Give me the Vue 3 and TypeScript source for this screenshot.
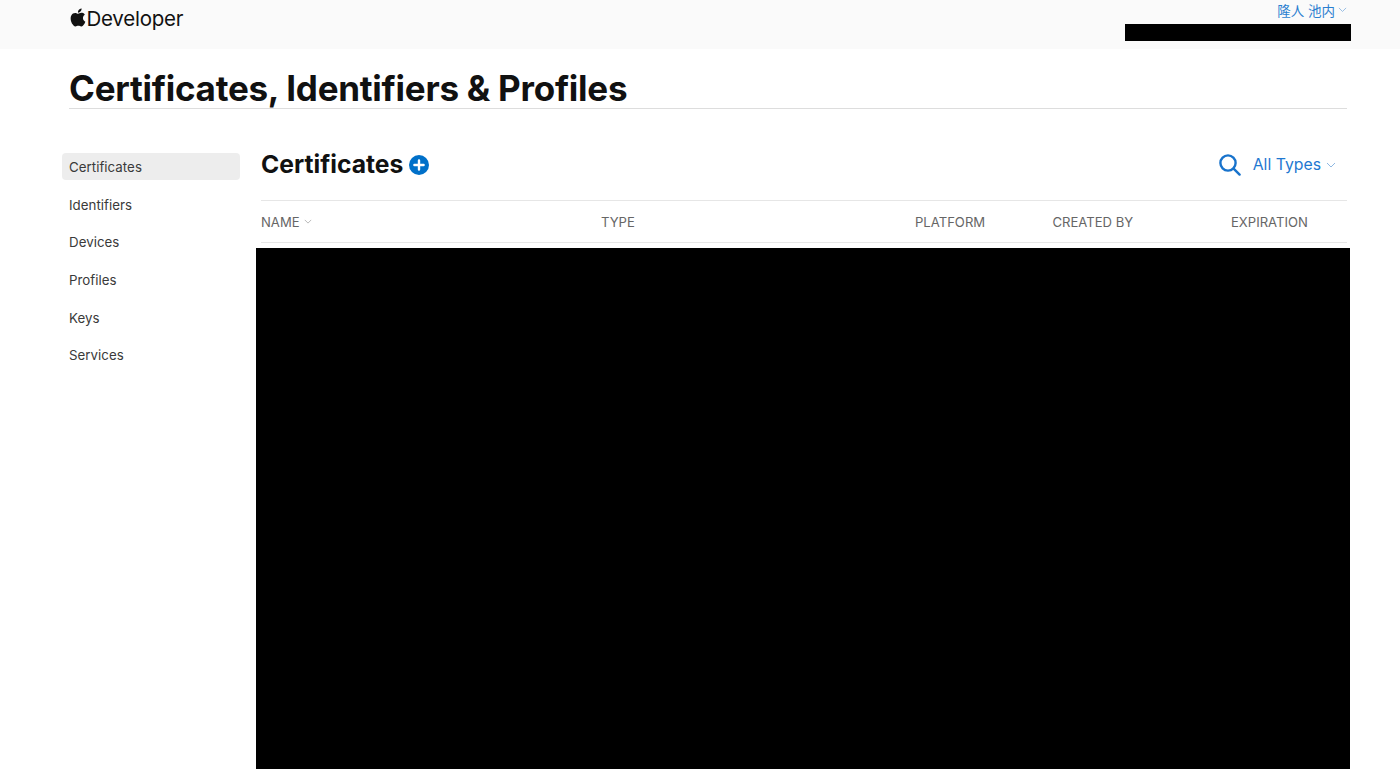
<script setup lang="ts">
interface Column {
  label: string
  sorted?: boolean
}

const navItems = ['Certificates', 'Identifiers', 'Devices', 'Profiles', 'Keys', 'Services']
const columns: Column[] = [
  { label: 'NAME', sorted: true },
  { label: 'TYPE' },
  { label: 'PLATFORM' },
  { label: 'CREATED BY' },
  { label: 'EXPIRATION' }
]
</script>

<template>
  <div class="page">
    <header class="topbar">
      <a class="brand">
        <svg class="apple" viewBox="0 0 24 24" aria-hidden="true">
          <path d="M12.152 6.896c-.948 0-2.415-1.078-3.96-1.04-2.04.027-3.91 1.183-4.961 3.014-2.117 3.675-.546 9.103 1.519 12.09 1.013 1.454 2.208 3.09 3.792 3.039 1.52-.065 2.09-.987 3.935-.987 1.831 0 2.35.987 3.96.948 1.637-.026 2.676-1.48 3.676-2.948 1.156-1.688 1.636-3.325 1.662-3.415-.039-.013-3.182-1.221-3.22-4.857-.026-3.04 2.48-4.494 2.597-4.559-1.429-2.09-3.623-2.324-4.39-2.376-2-.156-3.675 1.09-4.61 1.09zM15.53 3.83c.843-1.012 1.4-2.427 1.245-3.83-1.207.052-2.662.805-3.532 1.818-.78.896-1.454 2.338-1.273 3.714 1.338.104 2.715-.688 3.559-1.701" />
        </svg>
        <span>Developer</span>
      </a>
      <div class="account">
        <a class="account-name">
          隆人 池内
          <svg class="chevron small" viewBox="0 0 10 6" aria-hidden="true"><path d="M1 1l4 4 4-4" /></svg>
        </a>
        <div class="account-team"></div>
      </div>
    </header>

    <div class="title-wrap">
      <h1>Certificates, Identifiers &amp; Profiles</h1>
    </div>

    <div class="body">
      <nav class="sidebar">
        <a v-for="(item, i) in navItems" :key="item" class="nav-item" :class="{ active: i === 0 }">{{ item }}</a>
      </nav>

      <main class="content">
        <div class="toolbar">
          <div class="heading">
            <h2>Certificates</h2>
            <svg class="add" viewBox="0 0 20 20" aria-hidden="true">
              <circle cx="10" cy="10" r="10" fill="#0070c9" />
              <path d="M10 5.4v9.2M5.4 10h9.2" stroke="#fff" stroke-width="2.4" stroke-linecap="round" />
            </svg>
          </div>
          <div class="filters">
            <svg class="search" viewBox="0 0 22 22" aria-hidden="true">
              <circle cx="9" cy="9" r="7.6" />
              <path d="M14.6 14.6l6 6" />
            </svg>
            <a class="types">
              All Types
              <svg class="chevron" viewBox="0 0 10 6" aria-hidden="true"><path d="M1 1l4 4 4-4" /></svg>
            </a>
          </div>
        </div>

        <div class="table-head">
          <span v-for="col in columns" :key="col.label" class="col">
            {{ col.label }}
            <svg v-if="col.sorted" class="chevron grey" viewBox="0 0 10 6" aria-hidden="true"><path d="M1 1l4 4 4-4" /></svg>
          </span>
        </div>

        <div class="table-body"></div>
      </main>
    </div>
  </div>
</template>

<style>
html,
body {
  margin: 0;
  background: #fff;
}
</style>

<style scoped>
.page {
  height: 784px;
  overflow: hidden;
  font-family: Inter, "Noto Sans CJK JP", sans-serif;
  color: #111;
}

.topbar {
  display: flex;
  justify-content: space-between;
  height: 49px;
  padding: 0 49px 0 68.5px;
  box-sizing: border-box;
  background: #fafafa;
}

.brand {
  display: flex;
  align-items: center;
  gap: 0;
  height: 36px;
  color: #111;
  font-size: 20.5px;
  font-weight: 400;
  letter-spacing: -0.25px;
}

.apple {
  width: 18px;
  height: 19px;
  margin-top: -2px;
  fill: #111;
}

.account {
  display: flex;
  flex-direction: column;
  align-items: flex-end;
  width: 226px;
}

.account-name {
  display: flex;
  align-items: center;
  gap: 3px;
  height: 20px;
  padding-right: 4px;
  color: #2a7fd0;
  font-size: 13.5px;
}

.account-team {
  width: 226px;
  height: 17.5px;
  margin-top: 3.5px;
  background: #000;
}

.chevron {
  width: 10px;
  height: 6px;
  fill: none;
  stroke: #8fb8e2;
  stroke-width: 1;
}

.chevron.small {
  width: 9px;
  height: 5.4px;
}

.chevron.grey {
  width: 8px;
  height: 5px;
  stroke: #aaa;
}

.title-wrap {
  margin: 0 53px 0 69px;
  height: 59px;
  border-bottom: 1px solid #ddd;
}

h1 {
  margin: 0;
  padding-top: 17.5px;
  font-size: 35px;
  line-height: 42px;
  font-weight: 700;
  letter-spacing: -0.25px;
  white-space: nowrap;
}

.body {
  display: flex;
  margin-top: 44px;
  padding-left: 62px;
  padding-right: 53px;
}

.sidebar {
  display: flex;
  flex-direction: column;
  gap: 10.7px;
  width: 178px;
  flex: none;
}

.nav-item {
  height: 27px;
  padding-left: 7px;
  padding-top: 1px;
  box-sizing: border-box;
  line-height: 27px;
  border-radius: 4px;
  color: #3a3a3a;
  font-size: 13.3px;
  letter-spacing: 0.03px;
}

.nav-item.active {
  background: #ededed;
}

.content {
  flex: 1;
  min-width: 0;
  margin-left: 21px;
}

.toolbar {
  display: flex;
  justify-content: space-between;
  align-items: center;
  height: 23px;
  padding-bottom: 24px;
}

.heading {
  display: flex;
  align-items: center;
  gap: 6px;
}

h2 {
  margin: 0 0 1px;
  font-size: 24.7px;
  line-height: 24px;
  font-weight: 700;
}

.add {
  width: 20px;
  height: 20px;
}

.filters {
  display: flex;
  align-items: center;
  gap: 12px;
  padding-right: 11px;
  color: #1f78d1;
}

.search {
  width: 22px;
  height: 22px;
  fill: none;
  stroke: #1873cc;
  stroke-width: 2.4;
  stroke-linecap: round;
}

.types {
  display: flex;
  align-items: center;
  gap: 5px;
  font-size: 15.8px;
}

.table-head {
  display: grid;
  grid-template-columns: 340px 314px 137.5px 178.5px 1fr;
  align-items: center;
  height: 41px;
  border-top: 1px solid #e6e6e6;
  border-bottom: 1px solid #e6e6e6;
}

.col {
  display: flex;
  align-items: center;
  gap: 4px;
  color: #666;
  font-size: 13.1px;
}

.table-body {
  height: 521px;
  margin: 5px -3px 0 -5.5px;
  background: #000;
}
</style>
